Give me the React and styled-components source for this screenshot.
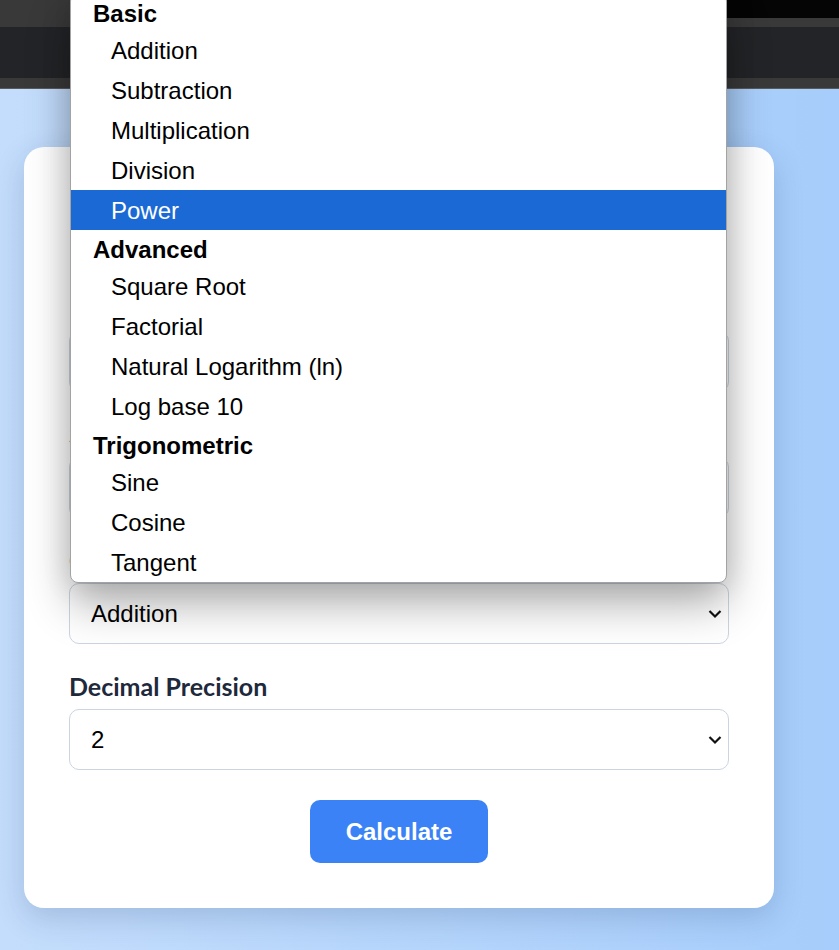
import styled, { createGlobalStyle } from "styled-components";

const GlobalStyle = createGlobalStyle`
    html, body {
        margin: 0;
        padding: 0;
    }
    body {
        font-family: "Liberation Sans", Arial, sans-serif;
        background: linear-gradient(90deg, #c4ddfc, #a6cdfb);
        min-height: 950px;
    }
    * {
        box-sizing: border-box;
    }
`;

const groups = [
    { name: "Basic", options: ["Addition", "Subtraction", "Multiplication", "Division", "Power"] },
    { name: "Advanced", options: ["Square Root", "Factorial", "Natural Logarithm (ln)", "Log base 10"] },
    { name: "Trigonometric", options: ["Sine", "Cosine", "Tangent"] },
];

function Chevron() {
    return (
        <ChevronIcon width="14" height="9" viewBox="0 0 14 9">
            <path d="M1.5 1.5 L7 7 L12.5 1.5" fill="none" stroke="#111" strokeWidth="2.2" />
        </ChevronIcon>
    );
}

function SelectField({ value, children }) {
    return (
        <ControlWrap>
            <Select defaultValue={value}>
                <option>{value}</option>
            </Select>
            <Chevron />
            {children}
        </ControlWrap>
    );
}

function App() {
    return (
        <>
            <GlobalStyle />
            <Chrome>
                <TopStrip>
                    <WindowCorner />
                </TopStrip>
                <AddressRow />
                <BottomStrip />
            </Chrome>
            <Main>
                <Card>
                    <Title>Scientific Calculator</Title>
                    <Field>
                        <Label>First Number</Label>
                        <Input type="number" placeholder="Enter first number" />
                    </Field>
                    <Field>
                        <Label>Second Number</Label>
                        <Input type="number" placeholder="Enter second number" />
                    </Field>
                    <Field>
                        <Label>Operation</Label>
                        <SelectField value="Addition">
                            <Popup>
                                {groups.map((g) => (
                                    <div key={g.name}>
                                        <GroupHeader>{g.name}</GroupHeader>
                                        {g.options.map((o) => (
                                            <Option key={o} $active={o === "Power"}>
                                                {o}
                                            </Option>
                                        ))}
                                    </div>
                                ))}
                            </Popup>
                        </SelectField>
                    </Field>
                    <Field>
                        <Label>Decimal Precision</Label>
                        <SelectField value="2" />
                    </Field>
                    <ButtonRow>
                        <Button>Calculate</Button>
                    </ButtonRow>
                </Card>
            </Main>
        </>
    );
}

export default App;

const Chrome = styled.header`
    display: flex;
    flex-direction: column;
    border-bottom: 1px solid #5a5a5a;
`;

const TopStrip = styled.div`
    height: 27px;
    background: #393939;
    display: flex;
    justify-content: flex-end;
    align-items: flex-start;
`;

const WindowCorner = styled.div`
    width: 112px;
    height: 18px;
    background: #050505;
`;

const AddressRow = styled.div`
    height: 51px;
    background: #232427;
`;

const BottomStrip = styled.div`
    height: 10px;
    background: #393939;
`;

const Main = styled.main`
    padding: 58px 0 40px 24px;
`;

const Card = styled.section`
    width: 750px;
    background: #fff;
    border-radius: 20px;
    padding: 45px;
    box-shadow: 0 10px 30px rgba(30, 60, 110, 0.2);
`;

const Title = styled.h1`
    margin: 0 0 60px;
    font-size: 36px;
    line-height: 44px;
    text-align: center;
    color: #1e293b;
`;

const Field = styled.div`
    margin-bottom: 30px;
`;

const Label = styled.label`
    display: block;
    margin-bottom: 11px;
    font-family: Lato, "Open Sans", sans-serif;
    font-weight: 700;
    font-size: 25px;
    line-height: 24px;
    color: #1e293b;
`;

const Input = styled.input`
    display: block;
    width: 100%;
    height: 61px;
    padding: 0 21px;
    border: 1px solid #cbd5e1;
    border-radius: 10px;
    font-family: "Liberation Sans", Arial, sans-serif;
    font-size: 24px;
    background: #fff;
`;

const ControlWrap = styled.div`
    position: relative;
`;

const Select = styled.select`
    display: block;
    width: 100%;
    height: 61px;
    padding: 0 21px;
    border: 1px solid #cbd5e1;
    border-radius: 10px;
    appearance: none;
    background: #fff;
    color: #000;
    font-family: "Liberation Sans", Arial, sans-serif;
    font-size: 24px;
`;

const ChevronIcon = styled.svg`
    position: absolute;
    right: 7px;
    top: 50%;
    transform: translateY(-50%);
    pointer-events: none;
`;

const Popup = styled.div`
    position: absolute;
    bottom: 100%;
    left: 1px;
    right: 2px;
    z-index: 10;
    background: #fff;
    border: 1px solid #a3a3a3;
    border-radius: 8px;
    overflow: hidden;
    box-shadow: 0 0 30px rgba(0, 0, 0, 0.12), 0 22px 44px rgba(0, 0, 0, 0.3);
    font-family: "Liberation Sans", Arial, sans-serif;
    font-size: 24px;
    color: #000;
`;

const GroupHeader = styled.div`
    height: 36px;
    line-height: 40px;
    padding-left: 22px;
    font-weight: 700;
`;

const Option = styled.div`
    height: 40px;
    line-height: 41px;
    padding-left: 40px;
    background: ${(p) => (p.$active ? "#1b69d4" : "transparent")};
    color: ${(p) => (p.$active ? "#fff" : "#000")};
`;

const ButtonRow = styled.div`
    display: flex;
    justify-content: center;
`;

const Button = styled.button`
    height: 63px;
    padding: 0 36px;
    border: none;
    border-radius: 10px;
    background: #3b82f6;
    color: #fff;
    font-family: "Liberation Sans", Arial, sans-serif;
    font-weight: 700;
    font-size: 24px;
    cursor: pointer;
`;
